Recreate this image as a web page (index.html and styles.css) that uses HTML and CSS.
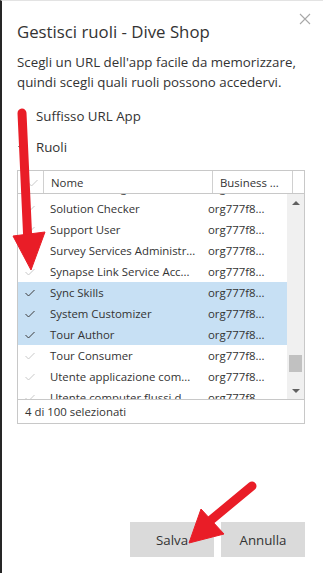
FILE: index.html
```html
<!DOCTYPE html>
<html>

<head>
    <title>Gestisci ruoli - Dive Shop</title>
    <link rel="stylesheet" href="styles.css">
</head>

<body>
    <div class="panel">
        <button class="close" aria-label="Chiudi">
            <svg width="12" height="12" viewBox="0 0 12 12">
                <path d="M1 1L11 11M11 1L1 11" stroke="#a8a8a8" stroke-width="1.1" fill="none" />
            </svg>
        </button>

        <h1>Gestisci ruoli - Dive Shop</h1>
        <p class="desc">Scegli un URL dell'app facile da memorizzare, quindi scegli quali ruoli possono accedervi.</p>

        <div class="section section-url">
            <span class="chevron">
                <svg width="9" height="9" viewBox="0 0 9 9">
                    <path d="M3 1L6.5 4.5L3 8" stroke="#8a8a8a" fill="none" />
                </svg>
            </span>
            <span>Suffisso URL App</span>
        </div>

        <div class="section section-roles">
            <span class="chevron">
                <svg width="10" height="9" viewBox="0 0 10 9">
                    <path d="M1 3L5 7L9 3" stroke="#8a8a8a" fill="none" />
                </svg>
            </span>
            <span>Ruoli</span>
        </div>

        <div class="grid">
            <div class="grid-head">
                <div class="head-check">
                    <svg class="check check-off" width="10" height="8" viewBox="0 0 10 8">
                        <path d="M0.5 4L3.5 7L9.5 1" />
                    </svg>
                </div>
                <div class="head-name">Nome</div>
                <div class="head-biz">Business ...</div>
                <div class="head-pad"></div>
            </div>

            <div class="grid-body">
                <div class="rows">
                    <div class="row row-partial">
                        <span class="cell-check"></span>
                        <span class="cell-name">Service Manager</span>
                        <span class="cell-org">org777f8...</span>
                    </div>
                    <div class="row">
                        <span class="cell-check"><svg class="check check-off" width="10" height="8" viewBox="0 0 10 8"><path d="M0.5 4L3.5 7L9.5 1" /></svg></span>
                        <span class="cell-name">Solution Checker</span>
                        <span class="cell-org">org777f8...</span>
                    </div>
                    <div class="row">
                        <span class="cell-check"><svg class="check check-off" width="10" height="8" viewBox="0 0 10 8"><path d="M0.5 4L3.5 7L9.5 1" /></svg></span>
                        <span class="cell-name">Support User</span>
                        <span class="cell-org">org777f8...</span>
                    </div>
                    <div class="row">
                        <span class="cell-check"><svg class="check check-off" width="10" height="8" viewBox="0 0 10 8"><path d="M0.5 4L3.5 7L9.5 1" /></svg></span>
                        <span class="cell-name">Survey Services Administr...</span>
                        <span class="cell-org">org777f8...</span>
                    </div>
                    <div class="row">
                        <span class="cell-check"><svg class="check check-off" width="10" height="8" viewBox="0 0 10 8"><path d="M0.5 4L3.5 7L9.5 1" /></svg></span>
                        <span class="cell-name">Synapse Link Service Acc...</span>
                        <span class="cell-org">org777f8...</span>
                    </div>
                    <div class="row selected">
                        <span class="cell-check"><svg class="check" width="10" height="8" viewBox="0 0 10 8"><path d="M0.5 4L3.5 7L9.5 1" /></svg></span>
                        <span class="cell-name">Sync Skills</span>
                        <span class="cell-org">org777f8...</span>
                    </div>
                    <div class="row selected">
                        <span class="cell-check"><svg class="check" width="10" height="8" viewBox="0 0 10 8"><path d="M0.5 4L3.5 7L9.5 1" /></svg></span>
                        <span class="cell-name">System Customizer</span>
                        <span class="cell-org">org777f8...</span>
                    </div>
                    <div class="row selected">
                        <span class="cell-check"><svg class="check" width="10" height="8" viewBox="0 0 10 8"><path d="M0.5 4L3.5 7L9.5 1" /></svg></span>
                        <span class="cell-name">Tour Author</span>
                        <span class="cell-org">org777f8...</span>
                    </div>
                    <div class="row">
                        <span class="cell-check"><svg class="check check-off" width="10" height="8" viewBox="0 0 10 8"><path d="M0.5 4L3.5 7L9.5 1" /></svg></span>
                        <span class="cell-name">Tour Consumer</span>
                        <span class="cell-org">org777f8...</span>
                    </div>
                    <div class="row">
                        <span class="cell-check"><svg class="check check-off" width="10" height="8" viewBox="0 0 10 8"><path d="M0.5 4L3.5 7L9.5 1" /></svg></span>
                        <span class="cell-name">Utente applicazione com...</span>
                        <span class="cell-org">org777f8...</span>
                    </div>
                    <div class="row">
                        <span class="cell-check"><svg class="check check-off" width="10" height="8" viewBox="0 0 10 8"><path d="M0.5 4L3.5 7L9.5 1" /></svg></span>
                        <span class="cell-name">Utente computer flussi d...</span>
                        <span class="cell-org">org777f8...</span>
                    </div>
                </div>
                <div class="scrollbar">
                    <span class="scroll-btn"><span class="arrow-up"></span></span>
                    <span class="scroll-track"><span class="thumb"></span></span>
                    <span class="scroll-btn"><span class="arrow-down"></span></span>
                </div>
            </div>

            <div class="grid-foot">4 di 100 selezionati</div>
        </div>

        <div class="actions">
            <button class="btn">Salva</button>
            <button class="btn">Annulla</button>
        </div>

        <!-- frecce rosse di annotazione sopra lo screenshot -->
        <svg class="annotations" width="323" height="573" viewBox="0 0 323 573">
            <g fill="#e91d27" stroke="#e91d27">
                <line x1="22" y1="113" x2="28" y2="244" stroke-width="9" stroke-linecap="round" />
                <polygon points="13,236 45,232 31,270" stroke-width="1" stroke-linejoin="round" />
                <line x1="252" y1="486" x2="211" y2="520" stroke-width="9" stroke-linecap="round" />
                <polygon points="201,509 224,534 189,543" stroke-width="1" stroke-linejoin="round" />
            </g>
        </svg>
    </div>
</body>

</html>
```

FILE: styles.css
```css
body {
    margin: 0;
    padding: 0;
    background: #ffffff;
    font-family: 'Open Sans', 'Noto Sans', sans-serif;
    color: #333333;
}

.panel {
    position: relative;
    width: 323px;
    height: 573px;
    box-sizing: border-box;
    border-left: 2px solid #262626;
    border-top: 1px solid #e3e3e3;
    padding: 0 18px 16px 15px;
    display: flex;
    flex-direction: column;
}

.close {
    position: absolute;
    top: 12px;
    right: 12px;
    border: none;
    background: none;
    padding: 0;
    width: 12px;
    height: 12px;
    cursor: pointer;
}

.close svg {
    display: block;
}

h1 {
    margin: 19px 0 0;
    font-size: 16.8px;
    line-height: 24px;
    font-weight: normal;
    color: #333333;
}

.desc {
    margin: 8px 0 0;
    font-size: 13.3px;
    line-height: 20px;
}

.section {
    display: flex;
    align-items: center;
    font-size: 13.3px;
    line-height: 20px;
}

.section-url {
    margin-top: 14px;
}

.section-roles {
    margin-top: 11px;
}

.chevron {
    width: 19px;
    display: flex;
    align-items: center;
}

.chevron svg {
    display: block;
}

.grid {
    margin-top: 13px;
    border: 1px solid #c8c8c8;
    font-size: 11.4px;
}

.grid-head {
    display: flex;
    height: 22px;
    border-bottom: 1px solid #c8c8c8;
}

.grid-head > div {
    line-height: 20px;
    padding-top: 2px;
    box-sizing: border-box;
    white-space: nowrap;
}

.head-check {
    width: 26px;
    border-right: 1px solid #d0d0d0;
    display: flex;
    align-items: center;
    padding-left: 10px;
}

.head-name {
    width: 169px;
    border-right: 1px solid #d0d0d0;
    padding-left: 7px;
}

.head-biz {
    width: 80px;
    border-right: 1px solid #d0d0d0;
    padding-left: 7px;
}

.head-pad {
    flex: 1;
}

.grid-body {
    display: flex;
    height: 205px;
    overflow: hidden;
}

.rows {
    flex: 1;
    overflow: hidden;
}

.row {
    display: flex;
    height: 21px;
    line-height: 21px;
    white-space: nowrap;
}

.row-partial {
    margin-top: -17px;
}

.row.selected {
    background: #c7e0f4;
}

.cell-check {
    width: 25px;
    padding-left: 7px;
    box-sizing: border-box;
    display: flex;
    align-items: center;
}

.cell-name {
    width: 158px;
    padding: 0 7px;
    box-sizing: border-box;
    overflow: hidden;
}

.cell-org {
    flex: 1;
    padding-left: 7px;
    overflow: hidden;
}

.check {
    display: block;
}

.check path {
    fill: none;
    stroke: #3a3a3a;
    stroke-width: 1;
}

.check-off path {
    stroke: #c8c8c8;
}

.scrollbar {
    width: 17px;
    background: #f0f0f0;
    display: flex;
    flex-direction: column;
}

.scroll-btn {
    height: 17px;
    display: flex;
    align-items: center;
    justify-content: center;
}

.arrow-up {
    width: 0;
    height: 0;
    border-left: 4px solid transparent;
    border-right: 4px solid transparent;
    border-bottom: 4px solid #606060;
}

.arrow-down {
    width: 0;
    height: 0;
    border-left: 4px solid transparent;
    border-right: 4px solid transparent;
    border-top: 4px solid #606060;
}

.scroll-track {
    flex: 1;
}

.thumb {
    display: block;
    margin: 144px 0 0 2px;
    width: 13px;
    height: 17px;
    background: #c1c1c1;
}

.grid-foot {
    border-top: 1px solid #c8c8c8;
    height: 23px;
    line-height: 23px;
    padding-left: 7px;
}

.actions {
    margin-top: auto;
    display: flex;
    justify-content: flex-end;
    gap: 7px;
}

.btn {
    width: 84px;
    height: 35px;
    border: none;
    background: #dadada;
    font-family: 'Open Sans', 'Noto Sans', sans-serif;
    font-size: 13.3px;
    color: #333333;
    padding: 0;
    cursor: pointer;
}

.annotations {
    position: absolute;
    top: -1px;
    left: -2px;
    pointer-events: none;
}
```
